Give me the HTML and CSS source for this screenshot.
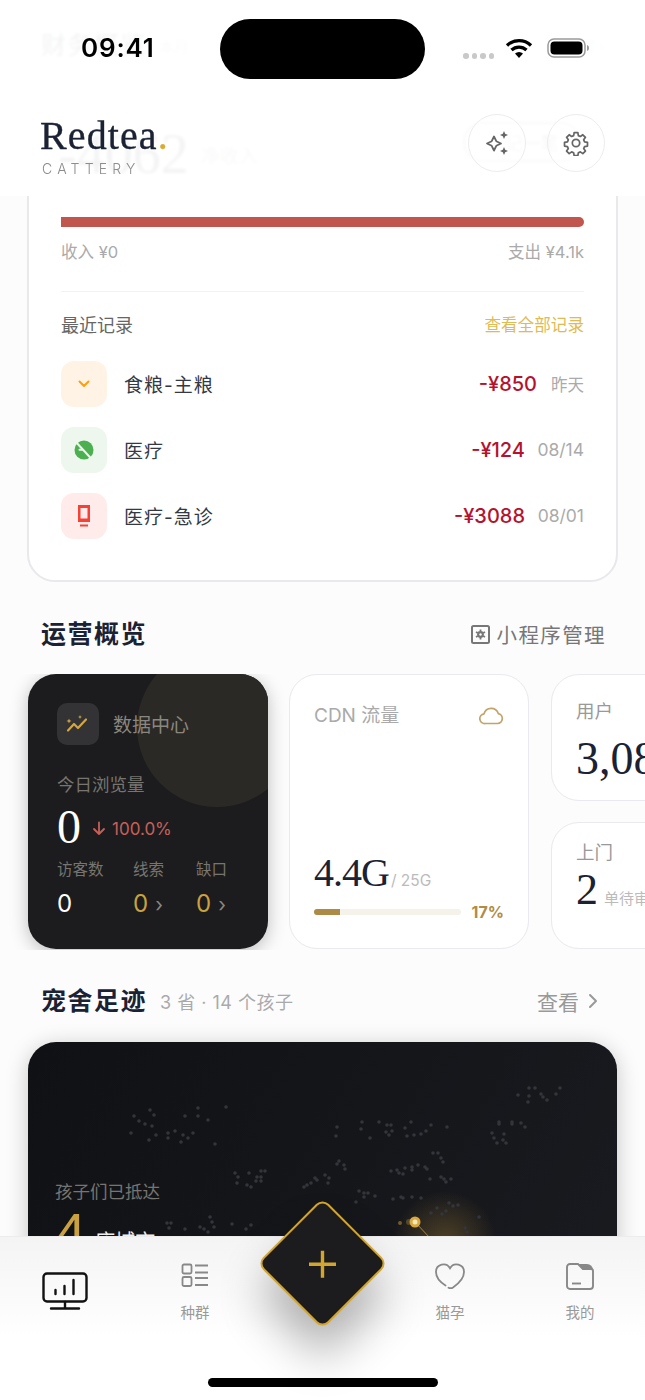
FILE: index.html
```html
<!DOCTYPE html>
<html lang="zh-CN">
<head>
<meta charset="utf-8">
<title>Redtea Cattery</title>
<link rel="stylesheet" href="styles.css">
</head>
<body>
<main class="page">
  <div class="ghost-head">
    <h2 class="section-title ghost-title">财务概览</h2><span class="ghost-month">本月</span>
    <span class="ghost-all">全部 ›</span>
  </div>
  <section class="finance">
    <div class="hero">
      <span class="hero-num">-4062</span><span class="hero-label">净收入</span>
      <span class="hero-btn">记一笔</span>
    </div>
    <div class="ratio"></div>
    <div class="ratio-labels"><span>收入 ¥0</span><span>支出 ¥4.1k</span></div>
    <div class="records-head"><span class="records-title">最近记录</span><span class="records-all">查看全部记录</span></div>
    <ul class="records">
      <li class="record">
        <span class="rec-icon rec-orange"><svg width="14" height="10" viewBox="0 0 14 10"><path d="M2.500 2.500 7 7l4.500-4.500" fill="none" stroke="#ff9f0a" stroke-width="2" stroke-linecap="round" stroke-linejoin="round"/></svg></span>
        <span class="rec-name">食粮-主粮</span><span class="rec-amount">-¥850</span><span class="rec-date rec-date-cn">昨天</span>
      </li>
      <li class="record">
        <span class="rec-icon rec-green"><svg width="24" height="24" viewBox="0 0 24 24"><circle cx="12" cy="12" r="9.500" fill="#4caf50"/><path d="M2.500 2.500 20.500 22" stroke="#edf7ee" stroke-width="2"/><path d="M7.500 11.800h2.500" stroke="#edf7ee" stroke-width="2" stroke-linecap="round"/></svg></span>
        <span class="rec-name">医疗</span><span class="rec-amount">-¥124</span><span class="rec-date">08/14</span>
      </li>
      <li class="record">
        <span class="rec-icon rec-red"><svg width="14" height="22" viewBox="0 0 14 22"><path fill-rule="evenodd" d="M1 0h12v17H1zM3.500 3v10.500h7V3z" fill="#f44336"/><rect x="3" y="19.500" width="8" height="2" fill="#f44336"/></svg></span>
        <span class="rec-name">医疗-急诊</span><span class="rec-amount">-¥3088</span><span class="rec-date">08/01</span>
      </li>
    </ul>
  </section>

  <div class="section-head ops-head">
    <h2 class="section-title">运营概览</h2>
    <span class="section-link"><svg width="19" height="19" viewBox="0 0 19 19"><rect x="1" y="1" width="17" height="17" rx="1.500" fill="none" stroke="#777" stroke-width="2"/><path d="M9.500 4.500v2M9.500 12.500v2M5 7l1.800 1M12.200 11l1.800 1M5 12l1.800-1M12.200 8 14 7" stroke="#777" stroke-width="1.800"/><circle cx="9.500" cy="9.500" r="3.400" fill="#777"/><circle cx="9.500" cy="9.500" r="1.200" fill="#fcfcfd"/></svg>小程序管理</span>
  </div>

  <div class="ops-scroll">
    <article class="data-card">
      <div class="data-circle"></div>
      <div class="data-head">
        <span class="data-icon"><svg width="26" height="20" viewBox="0 0 26 20"><path d="M3 16.500 9 10l4 4 8-8.500" fill="none" stroke="#d3a63f" stroke-width="2.200" stroke-linecap="round" stroke-linejoin="round"/><path d="M4 4.500l.7 1.800 1.800.7-1.800.7L4 9.500l-.7-1.800L1.500 7l1.800-.7zM15 1l.6 1.400 1.400.6-1.400.6L15 5l-.6-1.400L13 3l1.400-.6z" fill="#d3a63f"/></svg></span>
        <span class="data-title">数据中心</span>
      </div>
      <div class="data-label">今日浏览量</div>
      <div class="data-main">
        <span class="data-num">0</span>
        <svg class="data-arrow" width="14" height="15" viewBox="0 0 14 15"><path d="M7 1.500V13M2 8l5 5 5-5" fill="none" stroke="#c8605a" stroke-width="1.800" stroke-linecap="round" stroke-linejoin="round"/></svg>
        <span class="data-change">100.0%</span>
      </div>
      <div class="data-grid">
        <span class="data-sub">访客数</span><span class="data-sub">线索</span><span class="data-sub">缺口</span>
        <span class="data-val">0</span><span class="data-val data-gold">0<i class="mini-chev">›</i></span><span class="data-val data-gold">0<i class="mini-chev">›</i></span>
      </div>
    </article>

    <article class="cdn-card">
      <div class="cdn-head"><span>CDN 流量</span><svg width="25" height="18" viewBox="0 0 25 18"><path d="M6.500 16.500h12a5 5 0 0 0 .8-9.900A7.500 7.500 0 0 0 5 6.800a4.900 4.900 0 0 0 1.500 9.700z" fill="none" stroke="#c4a26a" stroke-width="1.700" stroke-linejoin="round"/></svg></div>
      <div class="cdn-value"><span class="cdn-num">4.4G</span><span class="cdn-total">/ 25G</span></div>
      <div class="cdn-progress"><div class="cdn-track"><div class="cdn-fill"></div></div><span class="cdn-pct">17%</span></div>
    </article>

    <div class="mini-col">
      <article class="mini-card mini-users">
        <div class="mini-label">用户</div>
        <div class="mini-num mini-num-users">3,088</div>
      </article>
      <article class="mini-card mini-visit">
        <div class="mini-label">上门</div>
        <div class="mini-num mini-num-visit">2<span class="mini-note">单待审核</span></div>
      </article>
    </div>
  </div>

  <div class="section-head foot-head">
    <div class="foot-left"><h2 class="section-title">宠舍足迹</h2><span class="foot-sub">3 省 · 14 个孩子</span></div>
    <span class="foot-link">查看<svg width="10" height="16" viewBox="0 0 10 16"><path d="M2 2l6 6-6 6" fill="none" stroke="#999" stroke-width="2" stroke-linecap="round" stroke-linejoin="round"/></svg></span>
  </div>

  <section class="map-card">
    <svg class="map-svg" width="589" height="300" viewBox="28 1042 589 300">
      <defs>
        <radialGradient id="glow"><stop offset="0" stop-color="#c79a3c" stop-opacity=".32"/><stop offset="1" stop-color="#c79a3c" stop-opacity="0"/></radialGradient>
      </defs>
      <circle cx="445" cy="1243" r="52" fill="url(#glow)"/>
      <path class="map-dots" d="M134 1116h0M150 1110h0M154 1115h0M139 1121h0M145 1124h0M152 1126h0M131 1133h0M156 1135h0M149 1140h0M168 1133h0M168 1138h0M175 1131h0M185 1116h0M198 1108h0M198 1116h0M208 1120h0M226 1107h0M183 1135h0M188 1138h0M193 1133h0M181 1142h0M215 1144h0M337 1127h0M336 1136h0M362 1122h0M361 1129h0M370 1138h0M379 1122h0M387 1125h0M391 1125h0M386 1132h0M392 1131h0M389 1135h0M411 1122h0M405 1128h0M407 1136h0M414 1135h0M421 1134h0M426 1131h0M431 1125h0M447 1127h0M499 1122h0M499 1124h0M512 1122h0M512 1124h0M521 1123h0M525 1127h0M492 1133h0M494 1138h0M497 1143h0M503 1140h0M506 1143h0M504 1134h0M529 1088h0M535 1088h0M518 1095h0M529 1096h0M528 1102h0M541 1094h0M543 1097h0M547 1100h0M556 1094h0M560 1088h0M339 1161h0M337 1164h0M344 1165h0M345 1169h0M433 1153h0M438 1153h0M441 1158h0M443 1162h0M391 1171h0M397 1170h0M399 1173h0M405 1168h0M412 1167h0M418 1165h0M425 1167h0M427 1169h0M412 1170h0M403 1174h0M430 1179h0M441 1177h0M444 1179h0M451 1179h0M446 1182h0M325 1175h0M329 1178h0M315 1178h0M317 1180h0M311 1183h0M307 1185h0M304 1187h0M328 1183h0M235 1173h0M238 1177h0M249 1173h0M237 1183h0M247 1185h0M251 1187h0M261 1171h0M265 1171h0M257 1177h0M261 1177h0M256 1181h0M261 1181h0M359 1191h0M364 1193h0M368 1193h0M364 1197h0M375 1196h0M356 1202h0M393 1199h0M401 1197h0M403 1198h0M412 1197h0M421 1198h0M449 1203h0M453 1206h0M458 1205h0M437 1208h0M446 1211h0M442 1214h0M431 1213h0M479 1217h0M465 1228h0M467 1232h0M167 1223h0M171 1223h0M169 1228h0M185 1229h0M200 1227h0M204 1229h0M210 1217h0M212 1222h0M214 1227h0M208 1232h0M232 1224h0M251 1225h0M246 1229h0"/>
      <path d="M415 1222 430 1238" stroke="#a9863c" stroke-width="1"/>
      <circle cx="400" cy="1223" r="2" fill="#6f5a2b"/>
      <circle cx="409" cy="1222" r="3" fill="#55482a"/>
      <circle cx="415" cy="1222" r="5.500" fill="#d9a93f"/>
      <circle cx="415" cy="1222" r="2.500" fill="#f7e6b8"/>
    </svg>
    <div class="map-label">孩子们已抵达</div>
    <div class="map-count"><span class="map-num">4</span><span class="map-unit">座城市</span></div>
  </section>
</main>

<header class="topbar">
  <div class="status">
    <span class="status-time">09:41</span>
    <span class="island"></span>
    <span class="status-icons">
      <span class="signal"><i></i><i></i><i></i><i></i></span>
      <svg class="wifi" width="28" height="20" viewBox="0 0 28 20"><path d="M2 7.500a17 17 0 0 1 24 0M6.500 12a11 11 0 0 1 15 0" fill="none" stroke="#000" stroke-width="3.200"/><path d="M10 15.500a6 6 0 0 1 8 0L14 20z" fill="#000"/></svg>
      <svg class="battery" width="42" height="20" viewBox="0 0 42 20"><rect x="1" y="1" width="37" height="18" rx="6" fill="none" stroke="#9a9a9a" stroke-width="1.500"/><rect x="3.500" y="3.500" width="32" height="13" rx="4" fill="#000"/><path d="M40 7c1.300.4 2 1.500 2 3s-.7 2.600-2 3z" fill="#9a9a9a"/></svg>
    </span>
  </div>
  <div class="brand-row">
    <div class="brand">
      <div class="brand-name">Redtea<span class="brand-dot">.</span></div>
      <div class="brand-sub">CATTERY</div>
    </div>
    <div class="brand-actions">
      <span class="round-btn"><svg width="28" height="28" viewBox="0 0 28 28"><path d="M11 7.500l2.300 4.700 4.700 2.300-4.700 2.300L11 21.500l-2.300-4.700L4 14.500l4.700-2.300z" fill="none" stroke="#666" stroke-width="1.800" stroke-linejoin="round"/><path d="M21 2l1.200 2.800L25 6l-2.800 1.200L21 10l-1.200-2.800L17 6l2.800-1.200zM21 18l1.200 2.800L25 22l-2.800 1.200L21 26l-1.200-2.800L17 22l2.800-1.200z" fill="#666"/></svg></span>
      <span class="round-btn"><svg width="26" height="26" viewBox="0 0 24 24"><path d="M10.300 2.500h3.400l.5 2.700 1.800.8 2.300-1.600 2.400 2.400-1.600 2.300.8 1.800 2.700.5v3.400l-2.700.5-.8 1.800 1.600 2.300-2.400 2.400-2.300-1.600-1.800.8-.5 2.700h-3.400l-.5-2.700-1.800-.8-2.300 1.600-2.400-2.400 1.600-2.300-.8-1.800-2.700-.5v-3.400l2.700-.5.8-1.800-1.600-2.300 2.400-2.400 2.300 1.600 1.800-.8z" fill="none" stroke="#666" stroke-width="1.600" stroke-linejoin="round"/><circle cx="12" cy="12" r="3.400" fill="none" stroke="#666" stroke-width="1.600"/></svg></span>
    </div>
  </div>
</header>

<nav class="tabbar">
  <div class="tab tab-active">
    <svg width="46" height="38" viewBox="0 0 46 38"><rect x="1.500" y="1.500" width="43" height="28" rx="3.500" fill="none" stroke="#111" stroke-width="2.400"/><path d="M13.500 22v-4M22.500 22V14M31.500 22V8M23 30v6M9 36.500h28" fill="none" stroke="#111" stroke-width="2.400" stroke-linecap="round"/></svg>
  </div>
  <div class="tab">
    <svg width="28" height="24" viewBox="0 0 28 24"><rect x="1.500" y="1.500" width="9" height="9" rx="1.500" fill="none" stroke="#888" stroke-width="1.800"/><rect x="1.500" y="14" width="9" height="9" rx="1.500" fill="none" stroke="#888" stroke-width="1.800"/><path d="M14 2.500h13M14 9.500h13M14 15h13M14 22h13" stroke="#888" stroke-width="1.800"/></svg>
    <span class="tab-label">种群</span>
  </div>
  <div class="tab tab-spacer"></div>
  <div class="tab">
    <svg width="30" height="26" viewBox="0 0 30 26"><path d="M10.500 22.500C5 19 1 15 1 9a7.500 7.500 0 0 1 14-3.800A7.500 7.500 0 0 1 29 9c0 7-6 12-11 15.500-1.500 1-3 1-4.500.2" fill="none" stroke="#888" stroke-width="1.800" stroke-linecap="round"/></svg>
    <span class="tab-label">猫孕</span>
  </div>
  <div class="tab">
    <svg width="28" height="27" viewBox="0 0 28 27"><path d="M4 1h8l5 5h8a2 2 0 0 1 2 2v15a3 3 0 0 1-3 3H4a3 3 0 0 1-3-3V4a3 3 0 0 1 3-3z" fill="none" stroke="#888" stroke-width="1.900" stroke-linejoin="round"/><path d="M12 1h9a6 6 0 0 1 6 6H17z" fill="#888"/><path d="M6 20.500h9" stroke="#888" stroke-width="1.900"/></svg>
    <span class="tab-label">我的</span>
  </div>
  <div class="home-bar"></div>
</nav>
<button class="add-btn" type="button"><svg class="add-plus" width="30" height="30" viewBox="0 0 30 30"><path d="M15 1.500v27M1.500 15h27" fill="none" stroke="#d2a52f" stroke-width="3.400"/></svg></button>
</body>
</html>
```

FILE: styles.css
```css
* { box-sizing: border-box; }
html, body { margin: 0; padding: 0; }
body {
  position: relative;
  width: 645px;
  height: 1400px;
  overflow: hidden;
  background: #fcfcfd;
  color: #1a2233;
  font-family: Inter, "Noto Sans CJK SC", sans-serif;
}
h2 { margin: 0; }
ul { margin: 0; padding: 0; list-style: none; }

.page { padding-top: 28px; }
.section-title { font-size: 25px; line-height: 34px; font-weight: 600; letter-spacing: 1.500px; color: #1a2233; }
.ghost-title { font-weight: 400; }

.ghost-head { display: flex; align-items: center; padding: 0 40px 0 41px; gap: 12px; }
.ghost-month { font-size: 15px; color: #aaa; }
.ghost-all { margin-left: auto; font-size: 15px; color: #aaa; }

.finance {
  margin: 25px 27px 0;
  padding: 29px 32px 41px;
  background: #fff;
  border: 2px solid #e8e8ed;
  border-radius: 28px;
}
.hero { display: flex; align-items: center; height: 62px; margin-bottom: 37px; padding-top: 10px; }
.hero-num { font-family: "Liberation Serif", serif; font-size: 56px; margin-left: -3px; color: #1a2233; }
.hero-label { margin-left: 12px; font-size: 19px; color: #888; }
.hero-btn { margin-left: auto; margin-right: 3px; margin-top: -24px; padding: 5px 20px 5px 40px; font-size: 18px; border: 2px solid #888; border-radius: 20px; color: #444; }
.ratio { height: 10px; background: #c0564e; border-radius: 0 5px 5px 0; }
.ratio-labels { display: flex; justify-content: space-between; margin-top: 14px; font-size: 16.500px; line-height: 22px; color: #aaa; }
.records-head {
  display: flex; justify-content: space-between; align-items: center;
  margin-top: 28px; padding-top: 22px; height: 45px;
  border-top: 1px solid #f2f2f4;
}
.records-title { margin-top: -2px; font-size: 18px; color: #666; }
.records-all { margin-top: -2px; font-size: 16.600px; color: #e0bb55; }
.records { display: flex; flex-direction: column; gap: 20px; margin-top: 25px; }
.record { display: flex; align-items: center; height: 46px; }
.rec-icon { display: flex; align-items: center; justify-content: center; width: 46px; height: 46px; border-radius: 13px; flex: none; }
.rec-orange { background: #fff3e6; }
.rec-green { background: #edf7ee; }
.rec-red { background: #ffebea; }
.rec-name { margin-left: 17px; margin-top: -2px; font-size: 19px; letter-spacing: 1px; color: #333a45; }
.rec-amount { margin-left: auto; margin-top: -1px; font-size: 20px; font-weight: 500; color: #b5122e; }
.rec-date { width: 59px; margin-top: -1px; text-align: right; font-size: 17.500px; color: #aaa; }
.rec-date-cn { width: 47px; font-size: 16.500px; }

.section-head { display: flex; justify-content: space-between; align-items: center; padding: 0 40px 0 41px; }
.ops-head { margin-top: 35px; }
.section-link { display: flex; align-items: center; gap: 7px; font-size: 20.500px; letter-spacing: 1.400px; color: #777; margin-right: -1px; }

.ops-scroll {
  display: flex; gap: 21px;
  height: 276px;
  margin-top: 23px;
  padding-left: 28px;
  overflow: hidden;
}
.data-card {
  position: relative;
  flex: none;
  width: 240px;
  height: 275px;
  padding: 29px;
  overflow: hidden;
  background: #1c1c1e;
  border-radius: 28px;
  box-shadow: 0 4px 18px rgba(0,0,0,.25);
}
.data-circle { position: absolute; left: 109px; top: -27px; width: 160px; height: 160px; border-radius: 50%; background: #2b2925; }
.data-head { position: relative; display: flex; align-items: center; gap: 14px; }
.data-icon { display: flex; align-items: center; justify-content: center; width: 42px; height: 42px; border-radius: 10px; background: #333335; }
.data-title { margin-top: -2px; font-size: 19px; color: #8a8780; }
.data-label { position: relative; margin-top: 28px; font-size: 17.500px; line-height: 24px; color: #77756f; }
.data-main { position: relative; display: flex; align-items: center; margin-top: 5px; height: 50px; }
.data-num { font-family: "Liberation Serif", serif; font-size: 48px; line-height: 50px; color: #fff; }
.data-arrow { margin: 3px 6px 0 11px; }
.data-change { margin-top: 3px; font-size: 17px; color: #c8605a; }
.data-grid { display: grid; grid-template-columns: 76px 63px 1fr; row-gap: 8px; margin-top: 7px; }
.data-sub { font-size: 15.500px; line-height: 22px; color: #77756f; }
.data-val { font-size: 24px; line-height: 30px; color: #fff; }
.data-gold { color: #c9a23f; }
.mini-chev { margin-left: 7px; font-style: normal; font-size: 20px; color: #8a8780; }

.cdn-card, .mini-card { background: #fff; border: 1.500px solid #e9e9ee; border-radius: 28px; }
.cdn-card { display: flex; flex-direction: column; flex: none; width: 240px; height: 275px; padding: 29px 24px 27px; }
.cdn-head { display: flex; justify-content: space-between; align-items: center; font-size: 19px; line-height: 24px; color: #aaa; }
.cdn-value { display: flex; align-items: baseline; margin-top: auto; line-height: 44px; }
.cdn-num { font-family: "Liberation Serif", serif; font-size: 40px; letter-spacing: -1px; color: #1a2233; }
.cdn-total { margin-left: 2px; font-size: 15.500px; color: #bbb; }
.cdn-progress { display: flex; align-items: center; gap: 11px; }
.cdn-track { flex: 1; height: 6px; border-radius: 3px; background: #f5f2ea; overflow: hidden; }
.cdn-fill { width: 18%; height: 100%; background: #ad8a45; }
.cdn-pct { font-size: 16px; line-height: 18px; font-weight: 700; color: #b08c48; }

.mini-col { display: flex; flex-direction: column; gap: 21px; flex: none; width: 240px; height: 275px; margin-left: 1px; }
.mini-card { flex: none; height: 127px; padding: 0 24px; overflow: hidden; }
.mini-users { padding-top: 25px; }
.mini-visit { padding-top: 18px; }
.mini-label { font-size: 18.500px; line-height: 22px; color: #999; }
.mini-num { font-family: "Liberation Serif", serif; font-size: 46px; line-height: 50px; color: #1a2233; white-space: nowrap; }
.mini-num-users { margin-top: 12px; }
.mini-num-visit { margin-top: 2px; font-size: 44px; }
.mini-note { margin-left: 6px; font-family: Inter, "Noto Sans CJK SC", sans-serif; font-size: 15px; color: #bbb; }

.foot-head { margin-top: 34px; padding-right: 47px; }
.foot-left { display: flex; align-items: center; gap: 13px; }
.foot-sub { font-size: 18px; letter-spacing: .5px; color: #aaa; }
.foot-link { display: flex; align-items: center; gap: 9px; font-size: 21px; color: #999; }

.map-card {
  position: relative;
  margin: 24px 28px 0;
  height: 300px;
  padding: 137px 27px 0;
  overflow: hidden;
  background: linear-gradient(120deg, #101114, #1a1b20);
  border-radius: 28px 28px 0 0;
  box-shadow: 0 4px 22px rgba(0,0,0,.22);
}
.map-svg { position: absolute; left: 0; top: 0; }
.map-dots { fill: none; stroke: #34353b; stroke-width: 3.600; stroke-linecap: round; }
.map-label { position: relative; font-size: 17.500px; line-height: 26px; color: #77756f; }
.map-count { position: relative; display: flex; align-items: flex-start; margin-top: -3px; }
.map-num { font-family: "Liberation Sans", sans-serif; font-size: 56px; line-height: 62px; font-weight: 300; color: #c9a23f; }
.map-unit { margin-left: 9px; margin-top: 28px; font-size: 20px; line-height: 24px; color: #eee; }

.topbar {
  position: absolute; left: 0; top: 0;
  width: 645px; height: 196px;
  background: rgba(255,255,255,.95);
  backdrop-filter: blur(1.500px);
}
.status { position: relative; height: 96px; }
.status-time { position: absolute; left: 81px; top: 32px; font-size: 26px; line-height: 32px; font-weight: 600; color: #000; letter-spacing: .8px; }
.island { position: absolute; left: 220px; top: 19px; width: 205px; height: 60px; border-radius: 30px; background: #000; }
.status-icons { position: absolute; left: 463px; top: 38px; display: flex; align-items: flex-start; }
.signal { display: flex; gap: 3px; margin-top: 15px; }
.signal i { display: block; width: 5.500px; height: 5.500px; border-radius: 50%; background: #c9c9c9; }
.wifi { margin-left: 11px; }
.battery { margin-left: 14px; }
.brand-row { display: flex; justify-content: space-between; align-items: flex-start; padding: 18px 40px 0 41px; }
.brand-name { font-family: "Liberation Serif", serif; font-size: 40px; line-height: 44px; letter-spacing: 1.100px; margin-left: -1px; color: #1a2233; -webkit-text-stroke: .35px #1a2233; }
.brand-dot { color: #d8ac2e; -webkit-text-stroke: .35px #d8ac2e; }
.brand-sub { margin-top: 2px; margin-left: 1px; font-size: 14px; line-height: 18px; font-weight: 300; letter-spacing: 5.200px; color: #8d8d8d; }
.brand-actions { display: flex; gap: 21px; }
.round-btn { display: flex; align-items: center; justify-content: center; width: 58px; height: 58px; border-radius: 50%; border: 1.500px solid #ececec; background: rgba(255,255,255,.35); }

.tabbar {
  position: absolute; left: 0; top: 1236px;
  width: 645px; height: 164px;
  display: grid;
  grid-template-columns: 130px 130px 1fr 130px 130px;
  align-content: start;
  padding-top: 26px;
  background: linear-gradient(#f4f4f4, #fff 62%);
  border-top: 1px solid #ececec;
}
.tab { display: flex; flex-direction: column; align-items: center; height: 60px; }
.tab-active { padding-top: 9px; }
.tab-label { margin-top: auto; font-size: 14.500px; line-height: 20px; color: #999; }
.home-bar { position: absolute; left: 208px; bottom: 13px; width: 230px; height: 9px; border-radius: 5px; background: #000; }

.add-btn {
  position: absolute; left: 276px; top: 1217px;
  width: 93px; height: 93px;
  padding: 0;
  display: flex; align-items: center; justify-content: center;
  transform: rotate(45deg);
  background: #1c1c1e;
  border: 2px solid #d2a52f;
  border-radius: 9px;
  box-shadow: 22px 22px 46px rgba(0,0,0,.3);
}
.add-plus { display: block; transform: rotate(-45deg); }
```
